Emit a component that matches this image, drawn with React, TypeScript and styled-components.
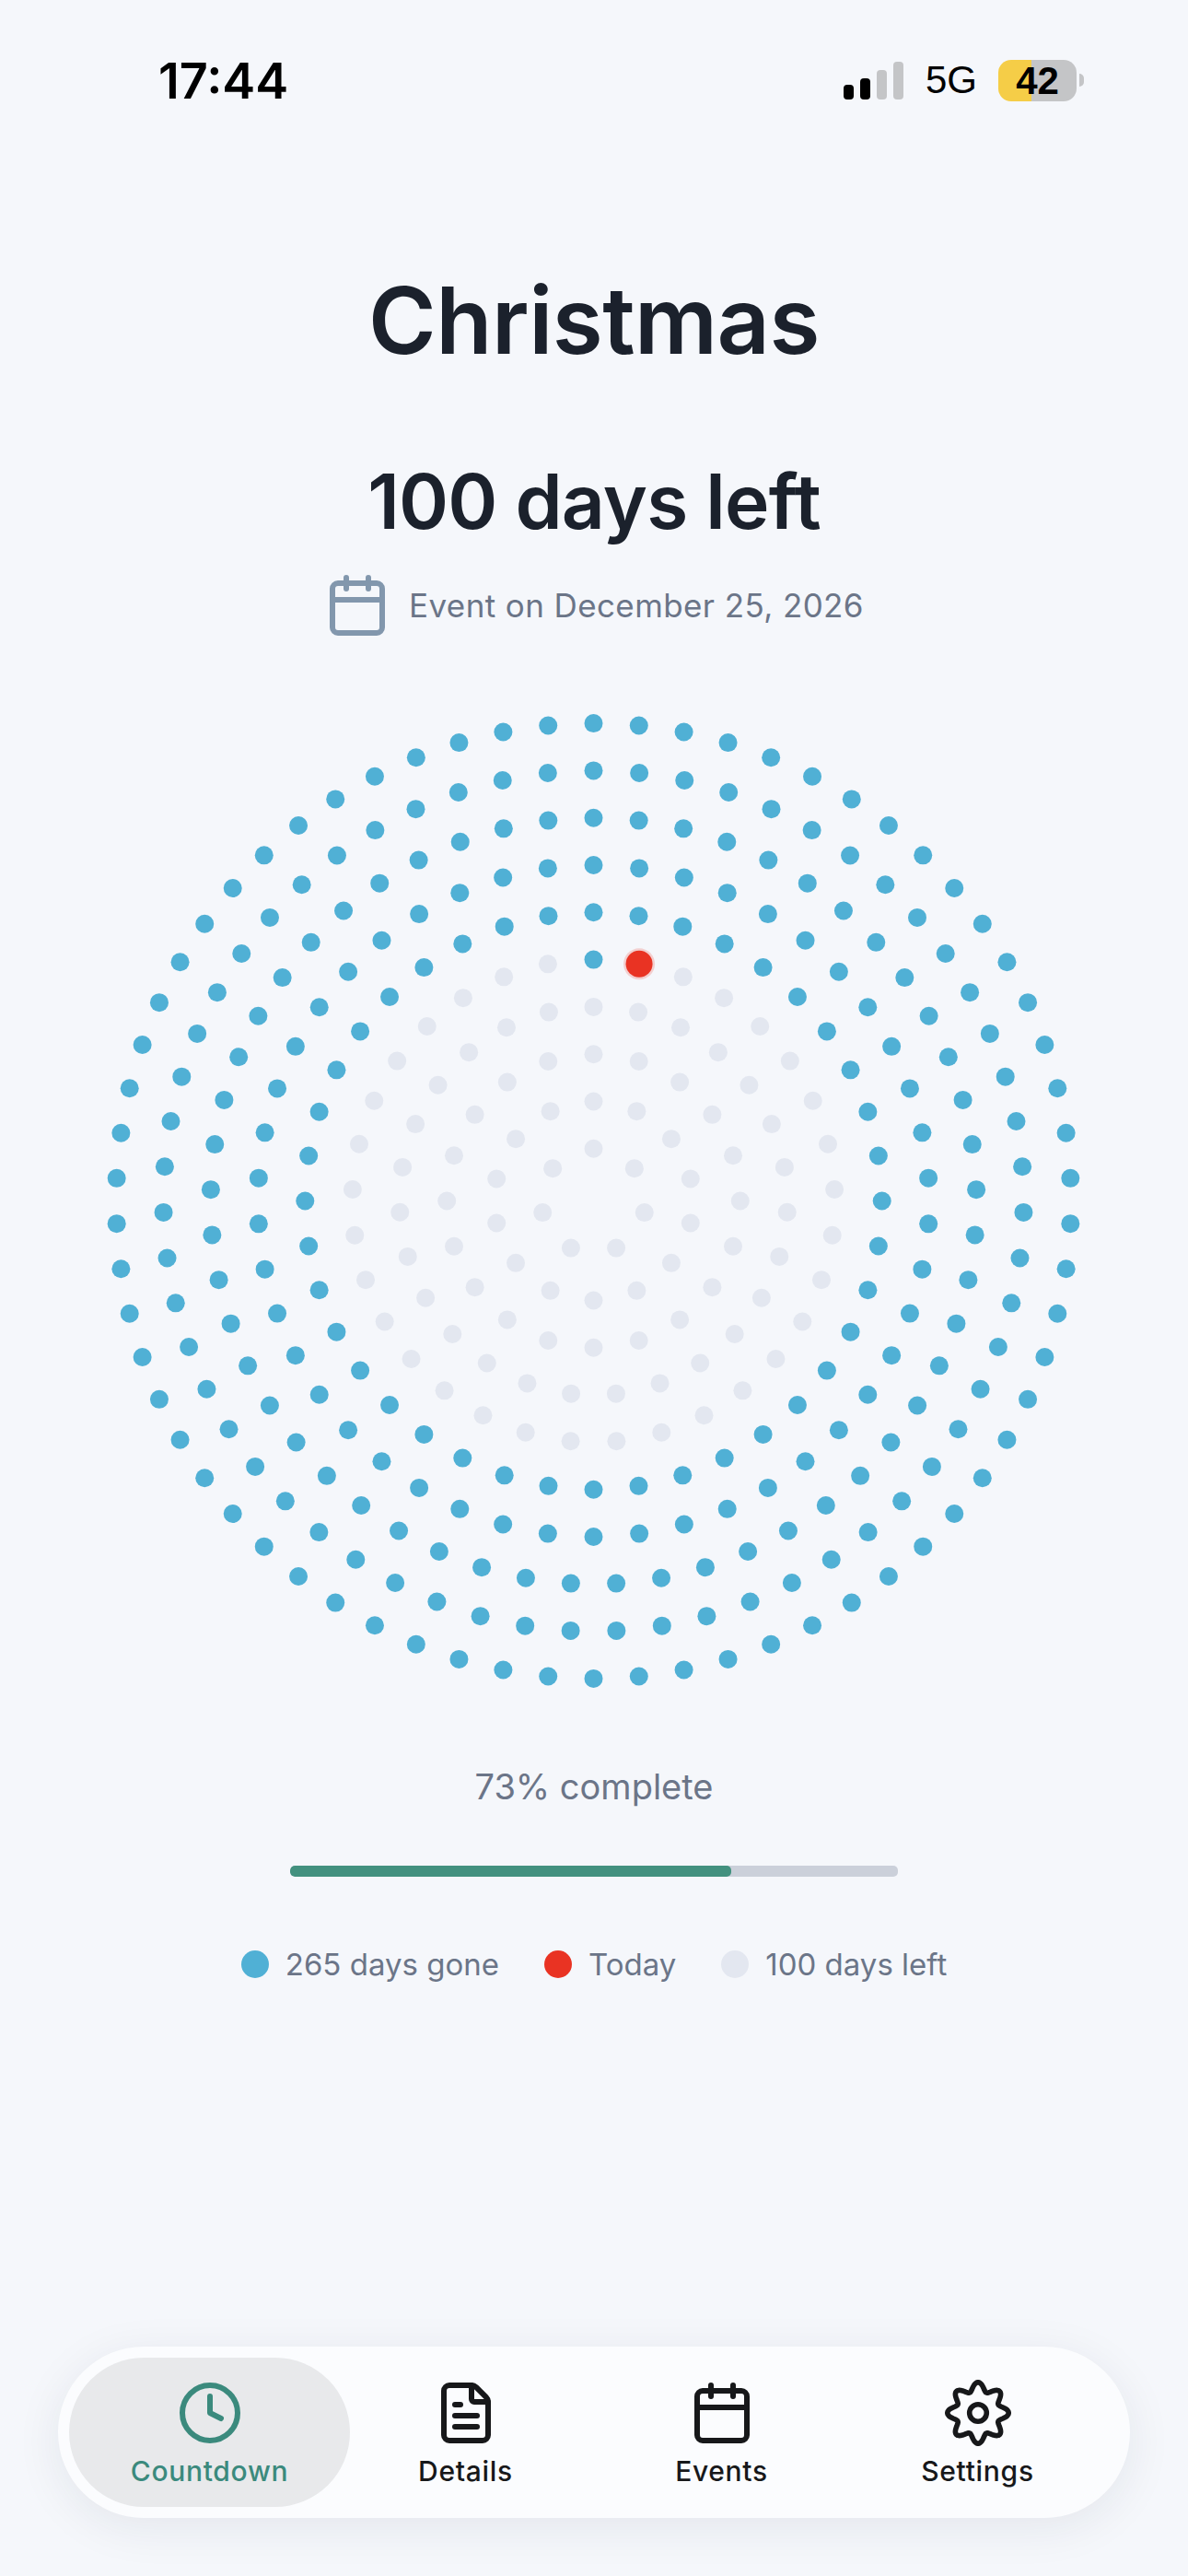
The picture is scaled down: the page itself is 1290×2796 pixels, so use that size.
import styled, { createGlobalStyle } from "styled-components";
import { Calendar, Clock, FileText } from "lucide-react";

const GlobalStyle = createGlobalStyle`
  html, body {
    margin: 0;
    padding: 0;
    background: #f5f7fb;
  }
  * {
    box-sizing: border-box;
  }
`;

const Page = styled.div`
  width: 1290px;
  height: 2796px;
  display: flex;
  flex-direction: column;
  align-items: center;
  background: #f5f7fb;
  font-family: Inter, "Liberation Sans", sans-serif;
  overflow: hidden;
`;

const StatusBar = styled.div`
  width: 100%;
  height: 140px;
  padding: 60px 121px 0 172px;
  display: flex;
  justify-content: space-between;
  align-items: flex-start;
  color: #000;
`;

const Time = styled.div`
  margin-top: 1px;
  font-size: 54px;
  line-height: 54px;
  font-weight: 600;
`;

const StatusIcons = styled.div`
  display: flex;
  align-items: center;
  height: 46px;
  margin-top: 4px;
  font-family: "Liberation Sans", Arial, sans-serif;
`;

const Signal = styled.div`
  display: flex;
  align-items: flex-end;
  gap: 7px;
  height: 41px;
  margin-right: 24px;
`;

const SignalBar = styled.span<{ $h: number; $on?: boolean }>`
  width: 11px;
  height: ${(p) => p.$h}px;
  border-radius: 4px;
  background: ${(p) => (p.$on ? "#000" : "#c4c5c7")};
`;

const Network = styled.span`
  font-size: 42px;
  line-height: 46px;
  margin-right: 23px;
`;

const Battery = styled.div`
  position: relative;
  width: 85px;
  height: 45px;
  border-radius: 14px;
  background: linear-gradient(90deg, #f5cd47 42%, #c4c5c7 42%);
  font-size: 42px;
  line-height: 45px;
  font-weight: 700;
  text-align: center;
  &::after {
    content: "";
    position: absolute;
    left: 88px;
    top: 15px;
    width: 5px;
    height: 14px;
    border-radius: 0 5px 5px 0;
    background: #c4c5c7;
  }
`;

const Title = styled.h1`
  margin: 148px 0 0;
  font-size: 100px;
  line-height: 120px;
  font-weight: 600;
  letter-spacing: -0.5px;
  color: #1b212c;
`;

const DaysLeft = styled.h2`
  margin: 87px 0 0;
  font-size: 82px;
  line-height: 100px;
  font-weight: 600;
  letter-spacing: -0.8px;
  color: #1b212c;
`;

const DateRow = styled.div`
  margin-top: 26px;
  height: 72px;
  display: flex;
  align-items: center;
  gap: 20px;
  color: #6b7588;
  font-size: 35px;
  letter-spacing: 0.4px;
  svg {
    color: #8297ad;
  }
`;

const DotChart = styled.svg`
  display: block;
  margin-top: 81px;
  width: 1060px;
  height: 1060px;
`;

const Percent = styled.div`
  margin-top: 80px;
  font-size: 38px;
  line-height: 50px;
  color: #6b7588;
`;

const Track = styled.div`
  margin-top: 61px;
  width: 660px;
  height: 12px;
  border-radius: 5px;
  background: #cbd0da;
  overflow: hidden;
`;

const Fill = styled.div`
  height: 100%;
  border-radius: 5px;
  background: #43917f;
`;

const Legend = styled.div`
  margin-top: 75px;
  display: flex;
  gap: 49px;
`;

const LegendItem = styled.div`
  display: flex;
  align-items: center;
  gap: 18px;
  font-size: 33px;
  line-height: 40px;
  color: #6b7588;
`;

const LegendDot = styled.span<{ $color: string }>`
  width: 30px;
  height: 30px;
  border-radius: 50%;
  background: ${(p) => p.$color};
`;

const Spacer = styled.div`
  flex: 1;
`;

const NavBar = styled.nav`
  width: 1164px;
  height: 186px;
  margin-bottom: 63px;
  padding: 12px;
  display: flex;
  border-radius: 93px;
  background: #fbfcfe;
  box-shadow: 0 10px 50px rgba(30, 40, 60, 0.08);
`;

const Tab = styled.div<{ $active?: boolean }>`
  flex: 0 0 305px;
  height: 162px;
  padding-top: 24px;
  display: flex;
  flex-direction: column;
  align-items: center;
  gap: 9px;
  border-radius: 81px;
  background: ${(p) => (p.$active ? "#e8e9eb" : "transparent")};
  color: ${(p) => (p.$active ? "#3b8a7d" : "#17181a")};
  & + & {
    margin-left: -27px;
  }
`;

const TabLabel = styled.span`
  font-size: 30px;
  line-height: 36px;
  font-weight: 500;
  letter-spacing: 0.7px;
`;

const RINGS = [66, 59, 53, 46, 40, 33, 27, 20, 14, 7];
const OUTER_RADIUS = 518.4;
const RING_GAP = 51.3;
const DAYS_GONE = 265;
const CENTER = 529.5;

type Dot = { x: number; y: number; day: number };

const dots: Dot[] = [];
RINGS.forEach((count, ring) => {
  const r = OUTER_RADIUS - ring * RING_GAP;
  for (let i = 0; i < count; i++) {
    const a = -Math.PI / 2 + (i / count) * Math.PI * 2;
    dots.push({
      x: CENTER + r * Math.cos(a),
      y: CENTER + r * Math.sin(a),
      day: dots.length,
    });
  }
});

// wavy outline of the gear, eight soft teeth
const gearPath = (() => {
  const pts: string[] = [];
  for (let i = 0; i < 144; i++) {
    const a = (i / 144) * Math.PI * 2;
    const r = 28.5 + 4.75 * Math.cos(8 * a);
    pts.push(`${(36 + r * Math.sin(a)).toFixed(2)} ${(36 - r * Math.cos(a)).toFixed(2)}`);
  }
  return `M${pts.join("L")}Z`;
})();

const GearIcon = () => (
  <svg
    width={72}
    height={72}
    viewBox="0 0 72 72"
    fill="none"
    stroke="currentColor"
    strokeWidth={5.6}
    strokeLinejoin="round"
  >
    <path d={gearPath} />
    <circle cx={36} cy={36} r={9.3} />
  </svg>
);

const tabs = [
  { label: "Countdown", icon: <Clock size={72} strokeWidth={2} />, active: true },
  { label: "Details", icon: <FileText size={72} strokeWidth={2} /> },
  { label: "Events", icon: <Calendar size={72} strokeWidth={2} /> },
  { label: "Settings", icon: <GearIcon /> },
];

const App = () => {
  return (
    <Page>
      <GlobalStyle />
      <StatusBar>
        <Time>17:44</Time>
        <StatusIcons>
          <Signal>
            <SignalBar $h={16} $on />
            <SignalBar $h={23} $on />
            <SignalBar $h={32} />
            <SignalBar $h={41} />
          </Signal>
          <Network>5G</Network>
          <Battery>42</Battery>
        </StatusIcons>
      </StatusBar>

      <Title>Christmas</Title>
      <DaysLeft>100 days left</DaysLeft>
      <DateRow>
        <Calendar size={72} strokeWidth={2} />
        Event on December 25, 2026
      </DateRow>

      <DotChart viewBox="0 0 1060 1060">
        {dots.map((d) => {
          if (d.day === DAYS_GONE) {
            return (
              <g key={d.day}>
                <circle cx={d.x} cy={d.y} r={17} fill="#e93323" opacity={0.2} />
                <circle cx={d.x} cy={d.y} r={14.5} fill="#e93323" />
              </g>
            );
          }
          return (
            <circle
              key={d.day}
              cx={d.x}
              cy={d.y}
              r={10}
              fill={d.day < DAYS_GONE ? "#50b0d5" : "#e3e7f0"}
            />
          );
        })}
      </DotChart>

      <Percent>73% complete</Percent>
      <Track>
        <Fill style={{ width: `${(DAYS_GONE / 365) * 100}%` }} />
      </Track>
      <Legend>
        <LegendItem>
          <LegendDot $color="#50b0d5" />
          265 days gone
        </LegendItem>
        <LegendItem>
          <LegendDot $color="#e93323" />
          Today
        </LegendItem>
        <LegendItem>
          <LegendDot $color="#e3e7f0" />
          100 days left
        </LegendItem>
      </Legend>

      <Spacer />

      <NavBar>
        {tabs.map(({ label, icon, active }) => (
          <Tab key={label} $active={active}>
            {icon}
            <TabLabel>{label}</TabLabel>
          </Tab>
        ))}
      </NavBar>
    </Page>
  );
};

export default App;
